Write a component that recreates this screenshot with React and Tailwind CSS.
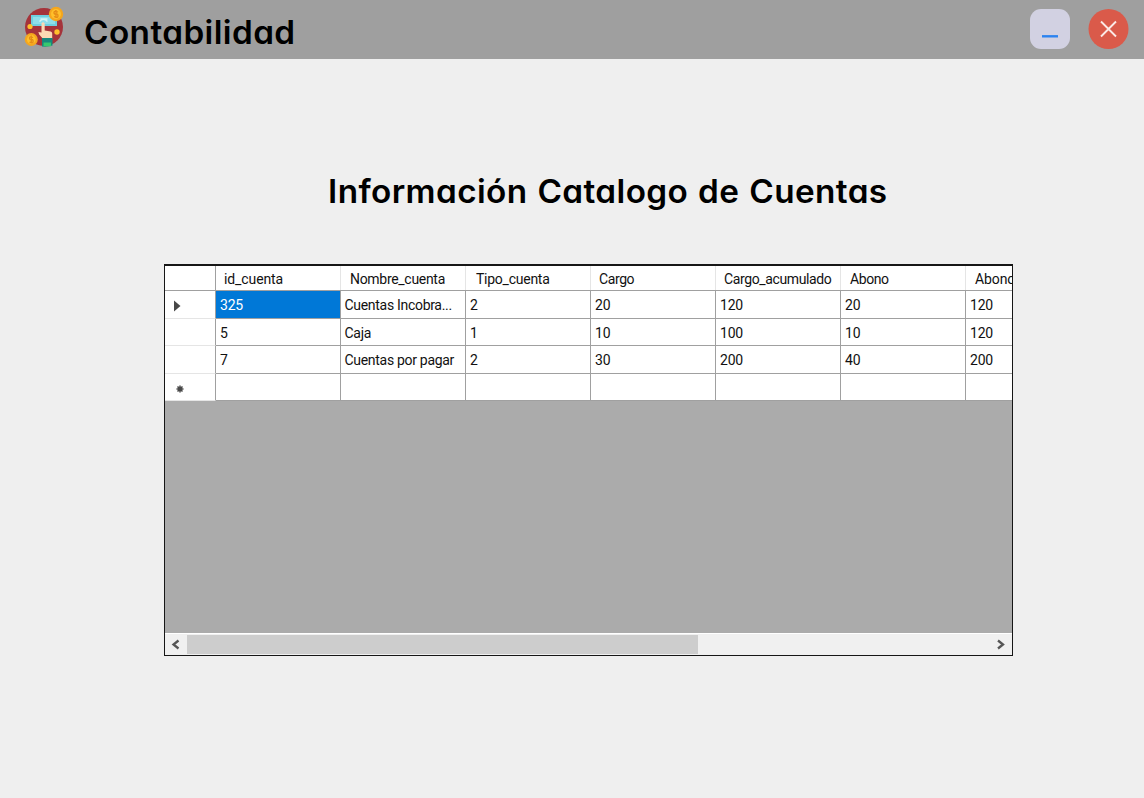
import React from "react";

const columns = [
  { name: "id_cuenta", cls: "pl-[8px] tracking-[-0.1px]" },
  { name: "Nombre_cuenta", cls: "pl-[9px] tracking-[-0.3px]" },
  { name: "Tipo_cuenta", cls: "pl-[10px] tracking-[-0.25px]" },
  { name: "Cargo", cls: "pl-[8px] tracking-[-0.4px]" },
  { name: "Cargo_acumulado", cls: "pl-[8px] tracking-[-0.38px]" },
  { name: "Abono", cls: "pl-[9px] tracking-[-0.4px]" },
  { name: "Abono", cls: "pl-[9px] tracking-[-0.1px]" },
];

const rows = [
  { cells: ["325", "Cuentas Incobra...", "2", "20", "120", "20", "120"], h: "h-[28px]" },
  { cells: ["5", "Caja", "1", "10", "100", "10", "120"], h: "h-[27px]" },
  { cells: ["7", "Cuentas por pagar", "2", "30", "200", "40", "200"], h: "h-[28px]" },
  { cells: ["", "", "", "", "", "", ""], h: "h-[27px]" },
];

function Logo() {
  return (
    <svg width="42" height="42" viewBox="0 0 42 42" className="block">
      <circle cx="20" cy="21" r="19" fill="#a5333a" />
      <path d="M7 9h26v11h-26z" fill="#6fcfdf" />
      <path d="M9 11h22v7h-22z" fill="#8fdeea" />
      <path d="M15.500 15.500q4-4.500 8 0M16.500 13h7" fill="none" stroke="#d5f5f5" strokeWidth="1.300" />
      <path d="M17.500 17.500q1.500-2.500 3.200 0v7l6 1q1.500.4 1.500 2v5h-9.500l-3.500-4-.8-2.500 3.100.500z" fill="#fbd9b4" />
      <path d="M18 32h10.500v7.500q-4.500 1.500-10.500 1z" fill="#16877d" />
      <path d="M19.500 36.500h7.500v3.800h-7.500z" fill="#37c76d" />
      <g fill="#f5a61d">
        <circle cx="32" cy="8" r="7.200" />
        <circle cx="7.300" cy="33.500" r="6.500" />
      </g>
      <g fill="#ffc02b">
        <circle cx="32" cy="8" r="5" />
        <circle cx="7.300" cy="33.500" r="4.400" />
        <circle cx="6" cy="20.500" r="2.600" />
        <circle cx="33" cy="26" r="2.700" />
      </g>
      <g fill="none" stroke="#e58b17" strokeWidth="1.300">
        <path d="M34 6q-4-1.500-4 .5t2 1.500 2 2-4 .5M32 4v8" />
        <path d="M9.100 31.500q-3.600-1.500-3.600.5t1.800 1.500 1.800 2-3.600.5M7.300 29.500v8" />
      </g>
    </svg>
  );
}

function Marker({ row }) {
  if (row === 0)
    return (
      <svg width="8" height="12" viewBox="0 0 8 12" className="ml-[9px] mt-[2px]">
        <path d="M0 .5 6.500 6 0 11.500z" fill="#484848" />
      </svg>
    );
  if (row === 3)
    return (
      <svg width="8" height="8" viewBox="0 0 8 8" className="ml-[11px] mt-[3px]">
        <path d="M4 .5v7M.5 4h7M1.500 1.500l5 5M6.500 1.500l-5 5" stroke="#484848" strokeWidth="1.500" />
      </svg>
    );
  return null;
}

export default function App() {
  return (
    <div className="flex h-[798px] w-[1144px] flex-col overflow-hidden bg-[#efefef] font-['Roboto',sans-serif] text-black">
      <header className="flex h-[59px] shrink-0 items-start bg-[#9f9f9f] pl-[24px] pr-[15px]">
        <div className="mt-[6px]"><Logo /></div>
        <h1 className="ml-[18px] mt-[13px] origin-left scale-x-[1.04] whitespace-nowrap font-['Inter',sans-serif] text-[32px] font-semibold leading-[40px] tracking-[0.4px] [font-feature-settings:'cv11'_1]">
          Contabilidad
        </h1>
        <div className="ml-auto mt-[9px] flex gap-[18px]">
          <button aria-label="Minimizar" className="block h-10 w-10">
            <svg width="40" height="40" viewBox="0 0 40 40">
              <rect width="40" height="40" rx="11" fill="#d2d1e2" />
              <path d="M12 27.300h16" stroke="#2c83f0" strokeWidth="2.400" />
            </svg>
          </button>
          <button aria-label="Cerrar" className="block h-10 w-[41px]">
            <svg width="41" height="40" viewBox="0 0 41 40">
              <circle cx="20.500" cy="20" r="20" fill="#da5a4a" />
              <path d="m13 12.500 15 15M28 12.500l-15 15" stroke="#fbe9e6" strokeWidth="1.900" />
            </svg>
          </button>
        </div>
      </header>

      <main className="flex flex-col">
        <h2 className="ml-[328px] mt-[113px] w-fit origin-left scale-x-[1.04] whitespace-nowrap font-['Inter',sans-serif] text-[32px] font-semibold leading-[40px] tracking-[0.4px] [font-feature-settings:'cv11'_1] [word-spacing:1px]">
          Información Catalogo de Cuentas
        </h2>
        <section className="ml-[164px] mt-[52px] flex h-[392px] w-[849px] flex-col overflow-hidden border border-t-2 border-[#161616] bg-[#ababab] text-[14px] text-[#111]">
          <div className="flex h-[25px] shrink-0 border-b border-[#a0a0a0] bg-white">
            <div className="w-[51px] shrink-0 border-r border-[#a0a0a0]" />
            {columns.map((c, i) => (
              <div key={i} className={"w-[125px] shrink-0 whitespace-nowrap border-r border-[#e5e5e5] leading-[26px] " + c.cls}>
                {c.name}
              </div>
            ))}
          </div>
          {rows.map((r, i) => (
            <div key={i} className={"flex shrink-0 bg-white " + r.h}>
              <div className="flex w-[51px] shrink-0 items-center border-b border-r border-b-[#e5e5e5] border-r-[#a0a0a0]">
                <Marker row={i} />
              </div>
              {r.cells.map((v, j) => (
                <div
                  key={j}
                  className={
                    "w-[125px] shrink-0 whitespace-nowrap border-b border-r border-[#a0a0a0] leading-[29px] " +
                    (j === 1 ? "pl-[3.5px] tracking-[-0.3px] " : "pl-[4px] tracking-[-0.2px] ") +
                    (i === 0 && j === 0 ? "bg-[#0078d7] text-white" : "")
                  }
                >
                  {v}
                </div>
              ))}
            </div>
          ))}
          <div className="mt-auto flex h-[22px] shrink-0 items-center border-t border-white bg-[#f0f0f0]">
            <svg width="22" height="21" viewBox="0 0 22 21" className="shrink-0">
              <path d="M13.500 6.500 8.500 10.500l5 4" fill="none" stroke="#555" strokeWidth="2.300" />
            </svg>
            <div className="h-[19px] w-[511px] bg-[#cdcdcd]" />
            <svg width="22" height="21" viewBox="0 0 22 21" className="ml-auto shrink-0">
              <path d="m8 6.500 5 4-5 4" fill="none" stroke="#555" strokeWidth="2.300" />
            </svg>
          </div>
        </section>
      </main>
    </div>
  );
}
